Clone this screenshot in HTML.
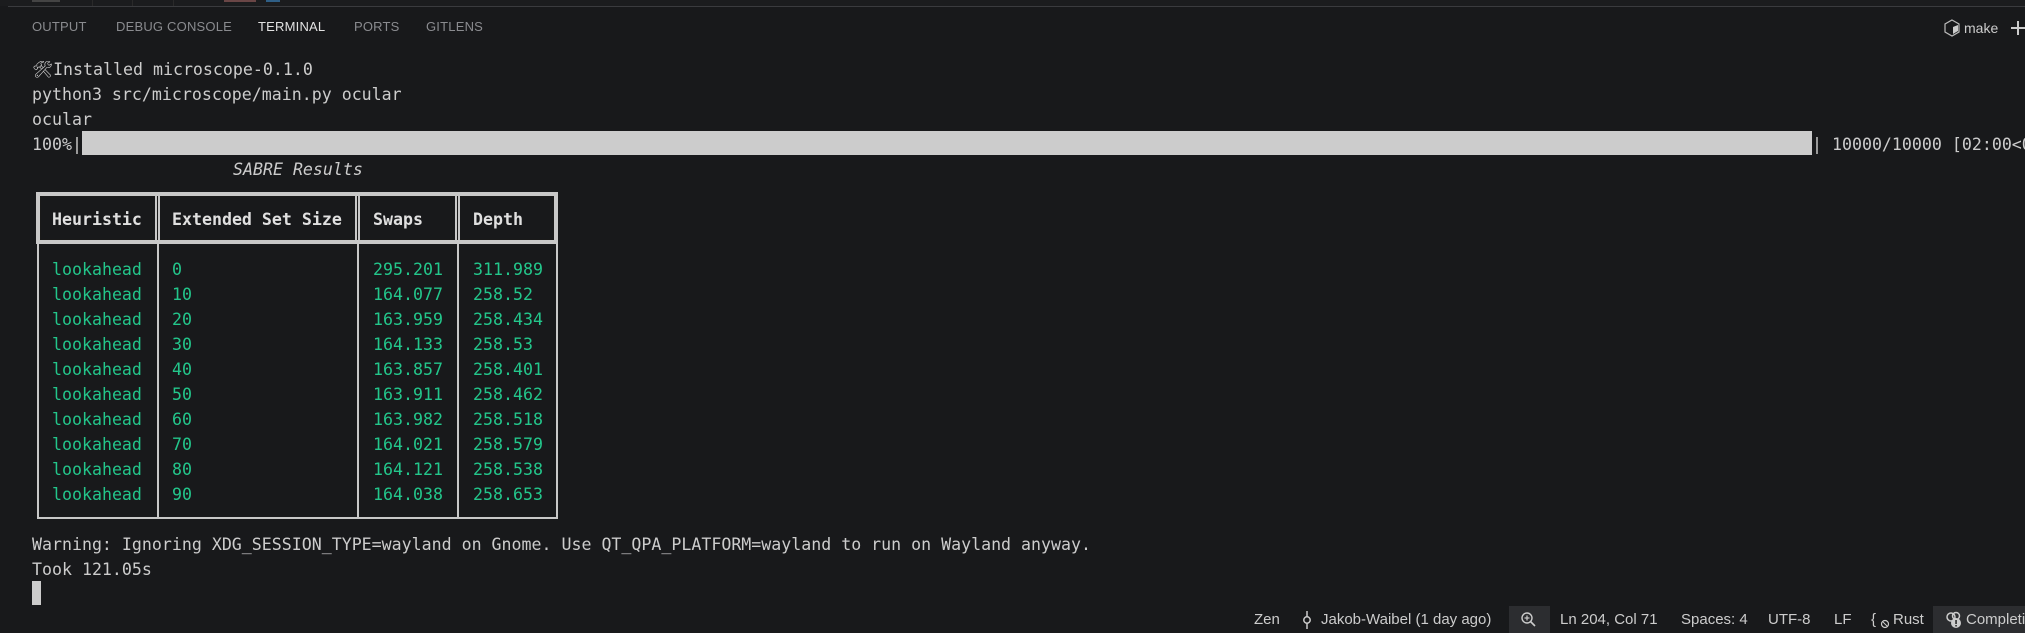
<!DOCTYPE html>
<html><head><meta charset="utf-8">
<style>
html,body{margin:0;padding:0;background:#181818;}
body{width:2025px;height:633px;position:relative;overflow:hidden;background:#18191b;}
.m{position:absolute;font-family:"DejaVu Sans Mono","Liberation Mono",monospace;font-size:16.6px;line-height:25px;color:#cccccc;white-space:pre;}
.g{color:#23c68b;}
.b{font-weight:bold;color:#e0e0e0;}
.s{position:absolute;font-family:"Liberation Sans",sans-serif;font-size:15px;color:#cccccc;white-space:pre;line-height:20px;}
.tab{position:absolute;top:19px;font-family:"Liberation Sans",sans-serif;font-size:13px;color:#8a8b8f;letter-spacing:0.2px;}
.line{position:absolute;background:#c8c8c8;}
</style></head><body>
<div style="position:absolute;left:0;top:0;width:2025px;height:6px;background:#1b1c1e;"></div>
<div style="position:absolute;left:8px;top:6px;width:2017px;height:1px;background:#3a3b3e;"></div>
<div style="position:absolute;left:92px;top:0;width:1px;height:6px;background:#2a2a2a;"></div>
<div style="position:absolute;left:132px;top:0;width:1px;height:6px;background:#2a2a2a;"></div>
<div style="position:absolute;left:173px;top:0;width:1px;height:6px;background:#2a2a2a;"></div>
<div style="position:absolute;left:32px;top:0;width:28px;height:2px;background:#444;"></div>
<div style="position:absolute;left:224px;top:0;width:32px;height:2px;background:#6a4646;"></div>
<div style="position:absolute;left:266px;top:0;width:14px;height:2px;background:#2f5f86;"></div>

<div class="tab" style="left:32px">OUTPUT</div>
<div class="tab" style="left:116px">DEBUG CONSOLE</div>
<div class="tab" style="left:258px;color:#e2e2e2">TERMINAL</div>
<div class="tab" style="left:354px">PORTS</div>
<div class="tab" style="left:426px">GITLENS</div>

<svg style="position:absolute;left:1944px;top:19px" width="16" height="18" viewBox="0 0 16 18"><path d="M8 1 L15 5 L15 13 L8 17 L1 13 L1 5 Z" fill="none" stroke="#bbb" stroke-width="1.2"/><path d="M9 8 L14 6 L14 12 L9 15 Z" fill="#ccc"/></svg>
<div class="s" style="left:1964px;top:18px;font-size:14px">make</div>
<div style="position:absolute;left:2011px;top:27px;width:14px;height:1.5px;background:#ccc"></div>
<div style="position:absolute;left:2017px;top:21px;width:1.5px;height:14px;background:#ccc"></div>

<div class="m" style="left:32px;top:57px">🛠Installed microscope-0.1.0</div>
<div class="m" style="left:32px;top:82px">python3 src/microscope/main.py ocular</div>
<div class="m" style="left:32px;top:107px">ocular</div>
<div class="m" style="left:32px;top:132px">100%|</div>
<div style="position:absolute;left:82px;top:131px;width:1730px;height:24px;background:#cccccc"></div>
<div style="position:absolute;left:1812px;top:132px;width:213px;height:25px;overflow:hidden;"><div class="m" style="left:0;top:0">| 10000/10000 [02:00&lt;00:00]</div></div>
<div class="m" style="left:233px;top:157px;font-style:italic">SABRE Results</div>

<div style="position:absolute;left:36px;top:192px;width:522px;height:52px;border:4px solid #c8c8c8;box-sizing:border-box;"></div>
<div style="position:absolute;left:40px;top:196px;width:514px;height:44px;border:1px solid #1a1a1a;box-sizing:border-box;"></div>
<div class="line" style="left:155px;top:192px;width:5px;height:52px"></div>
<div style="position:absolute;left:157px;top:196px;width:1px;height:44px;background:#1a1a1a"></div>
<div class="line" style="left:355px;top:192px;width:5px;height:52px"></div>
<div style="position:absolute;left:357px;top:196px;width:1px;height:44px;background:#1a1a1a"></div>
<div class="line" style="left:455px;top:192px;width:5px;height:52px"></div>
<div style="position:absolute;left:457px;top:196px;width:1px;height:44px;background:#1a1a1a"></div>
<div class="line" style="left:37px;top:244px;width:2px;height:275px"></div>
<div class="line" style="left:157px;top:244px;width:2px;height:275px"></div>
<div class="line" style="left:357px;top:244px;width:2px;height:275px"></div>
<div class="line" style="left:457px;top:244px;width:2px;height:275px"></div>
<div class="line" style="left:556px;top:244px;width:2px;height:275px"></div>
<div class="line" style="left:37px;top:517px;width:521px;height:2px"></div>

<div class="m b" style="left:52px;top:207px">Heuristic</div>
<div class="m b" style="left:172px;top:207px">Extended Set Size</div>
<div class="m b" style="left:373px;top:207px">Swaps</div>
<div class="m b" style="left:473px;top:207px">Depth</div>

<div class="m g" style="left:52px;top:257px">lookahead
lookahead
lookahead
lookahead
lookahead
lookahead
lookahead
lookahead
lookahead
lookahead</div>
<div class="m g" style="left:172px;top:257px">0
10
20
30
40
50
60
70
80
90</div>
<div class="m g" style="left:373px;top:257px">295.201
164.077
163.959
164.133
163.857
163.911
163.982
164.021
164.121
164.038</div>
<div class="m g" style="left:473px;top:257px">311.989
258.52
258.434
258.53
258.401
258.462
258.518
258.579
258.538
258.653</div>

<div class="m" style="left:32px;top:532px">Warning: Ignoring XDG_SESSION_TYPE=wayland on Gnome. Use QT_QPA_PLATFORM=wayland to run on Wayland anyway.</div>
<div class="m" style="left:32px;top:557px">Took 121.05s</div>
<div style="position:absolute;left:32px;top:581px;width:9px;height:24px;background:#cccccc"></div>

<div class="s" style="left:1254px;top:610px">Zen</div>
<svg style="position:absolute;left:1302px;top:611px" width="10" height="18" viewBox="0 0 10 18"><line x1="5" y1="0" x2="5" y2="18" stroke="#ccc" stroke-width="1.5"/><circle cx="5" cy="9" r="3.2" fill="#18191b" stroke="#ccc" stroke-width="1.5"/></svg>
<div class="s" style="left:1321px;top:610px">Jakob-Waibel (1 day ago)</div>
<div style="position:absolute;left:1509px;top:606px;width:41px;height:27px;background:#2c2d30"></div>
<svg style="position:absolute;left:1520px;top:611px" width="18" height="18" viewBox="0 0 18 18"><circle cx="7" cy="7" r="5" fill="none" stroke="#ccc" stroke-width="1.4"/><line x1="10.5" y1="10.5" x2="15" y2="15" stroke="#ccc" stroke-width="1.6"/><line x1="7" y1="4.5" x2="7" y2="9.5" stroke="#ccc" stroke-width="1.2"/><line x1="4.5" y1="7" x2="9.5" y2="7" stroke="#ccc" stroke-width="1.2"/></svg>
<div class="s" style="left:1560px;top:610px">Ln 204, Col 71</div>
<div class="s" style="left:1681px;top:610px">Spaces: 4</div>
<div class="s" style="left:1768px;top:610px">UTF-8</div>
<div class="s" style="left:1834px;top:610px">LF</div>
<div class="s" style="left:1871px;top:610px">{</div>
<svg style="position:absolute;left:1880px;top:617px" width="10" height="12" viewBox="0 0 10 12"><circle cx="5" cy="7" r="3.5" fill="none" stroke="#ccc" stroke-width="1.2"/><line x1="3" y1="5" x2="7" y2="9" stroke="#ccc"/></svg>
<div class="s" style="left:1893px;top:610px">Rust</div>
<div style="position:absolute;left:1933px;top:606px;width:92px;height:27px;background:#2c2d30;overflow:hidden">
<svg style="position:absolute;left:12px;top:5px" width="18" height="18" viewBox="0 0 18 18"><circle cx="6" cy="6" r="4" fill="none" stroke="#ccc" stroke-width="1.5"/><circle cx="11" cy="5" r="3.5" fill="none" stroke="#ccc" stroke-width="1.5"/><circle cx="11" cy="12" r="5" fill="#ccc"/><rect x="10.3" y="9" width="1.5" height="4" fill="#222"/><rect x="10.3" y="14" width="1.5" height="1.5" fill="#222"/></svg>
<div class="s" style="left:33px;top:4px">Completions</div></div>
</body></html>
